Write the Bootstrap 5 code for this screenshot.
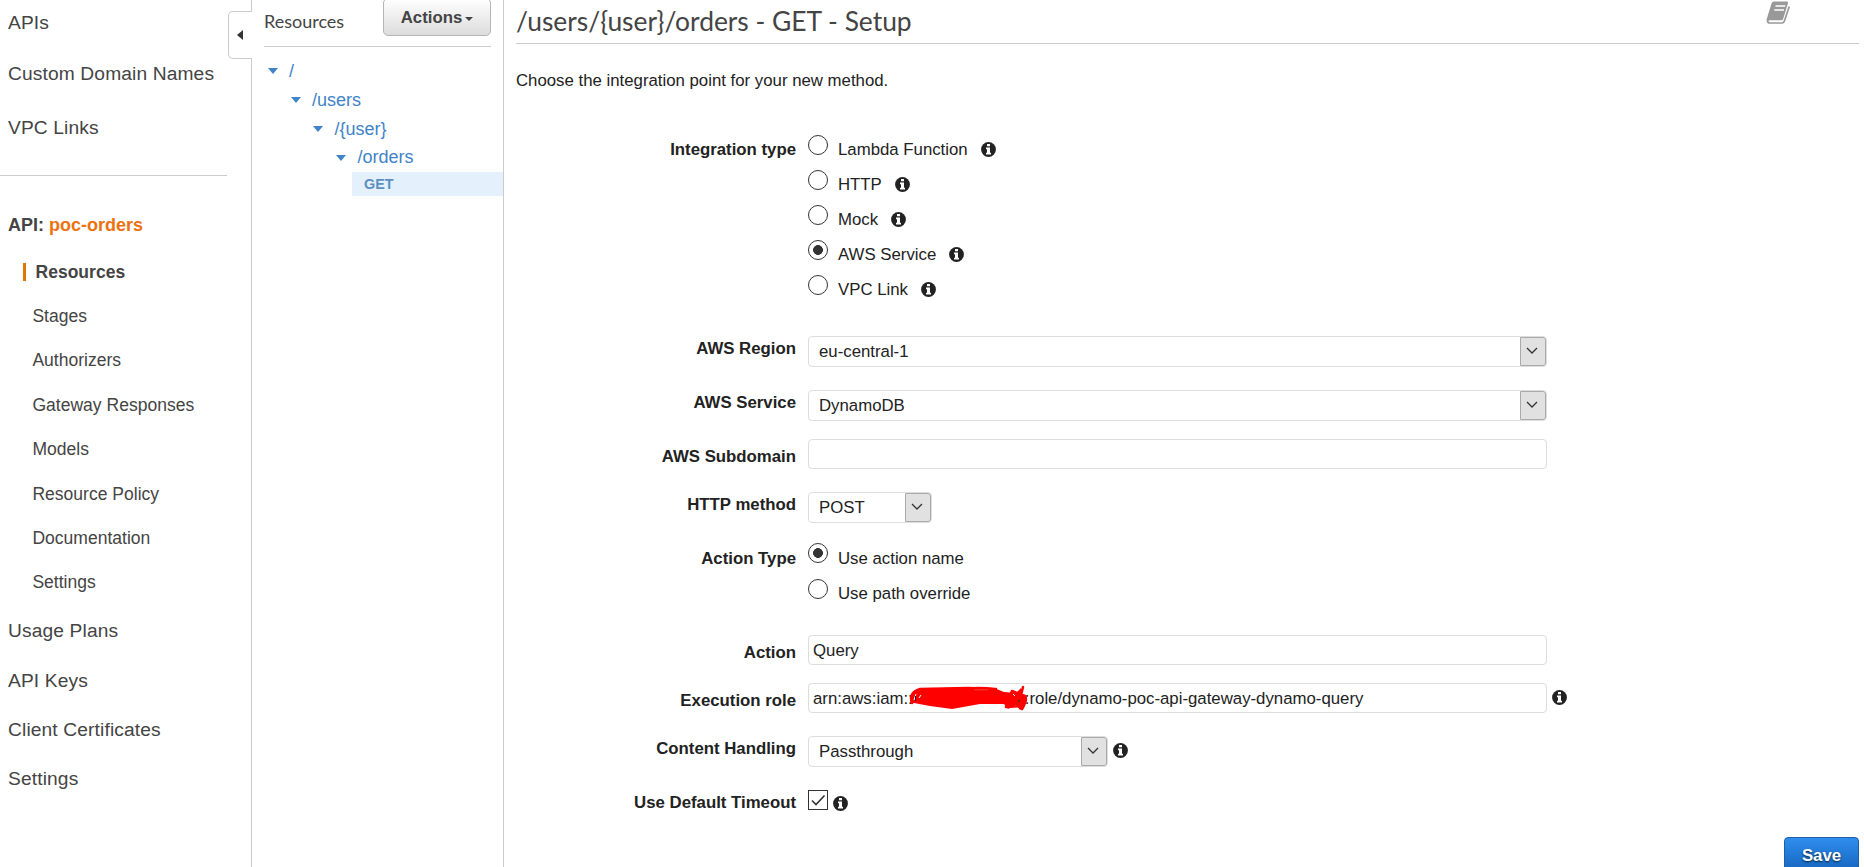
<!DOCTYPE html>
<html lang="en">
<head>
<meta charset="utf-8">
<meta name="viewport" content="width=device-width, initial-scale=1">
<title>API Gateway - Method Setup</title>
<link rel="stylesheet" href="https://cdn.jsdelivr.net/npm/bootstrap@5.3.0/dist/css/bootstrap.min.css">
<style>
  body { font-family: "Liberation Sans", Arial, sans-serif; font-size: 16.8px; line-height: 20px; color: #222; background: #fff; }
  .app { height: 867px; }
  /* left navigation */
  .side { width: 252px; border-right: 1px solid #ccc; color: #444; font-size: 19.2px; line-height: 24px; letter-spacing: .13px; padding-top: 11px; }
  .side a { display: block; color: inherit; text-decoration: none; padding-left: 8px; height: 24px; white-space: nowrap; }
  .side .rule { width: 227px; height: 1px; background: #ccc; margin: 35px 0 37px; }
  .side .api { font-size: 18px; letter-spacing: 0; font-weight: bold; }
  .side .api span { color: #ec7211; }
  .sub { font-size: 17.5px; letter-spacing: .02px; padding-top: 22.6px; gap: 20.4px; }
  .sub a { padding-left: 32.4px; }
  .sub a.current { font-weight: bold; padding-left: 23px; display: flex; align-items: center; }
  .sub a.current::before { content: ""; width: 3px; height: 18px; background: #e07700; margin-right: 9.5px; }
  .lower { padding-top: 25px; gap: 25.2px; }
  .collapser { left: 228px; top: 11px; width: 24px; height: 48px; border: 1px solid #ccc; border-right: 0; border-radius: 5px 0 0 5px; background: #fff; }
  /* resource tree */
  .tree { width: 252px; border-right: 1px solid #ccc; }
  .tree-head { height: 47px; margin: 0 12px; border-bottom: 1px solid #ccc; color: #444; }
  .tree-head .ttl { font: 18px/22px Lato, sans-serif; padding-top: 10px; }
  .btn-actions { width: 108px; height: 38px; margin-top: -2px; border: 1px solid #b5b5b5; border-radius: 5px; background: linear-gradient(#fff, #dcdcdc); color: #444; font-size: 16.8px; font-weight: bold; line-height: 20px; padding: 1px 0 0; }
  .btn-actions i { display: inline-block; border: 4px solid transparent; border-top-color: #444; border-bottom: 0; margin-left: 3px; vertical-align: 2px; }
  .node { height: 28.8px; line-height: 28.8px; font-size: 18px; color: #3f83c8; }
  .node::before { content: ""; border: 5.5px solid transparent; border-top: 6px solid #3f83c8; border-bottom: 0; margin-right: 11.5px; }
  .method { height: 24px; margin-left: 100px; padding-left: 12px; background: #e4f1fd; color: #5c8fc0; font-size: 14.4px; font-weight: bold; line-height: 24px; }
  /* main pane */
  .main { padding-left: 12px; padding-right: 5px; }
  .main-head { height: 44px; border-bottom: 1px solid #ccc; }
  .main-head h1 { font: 26.4px/32px Lato, sans-serif; letter-spacing: -.01px; color: #444; margin: 5px 0 0; }
  .main-head svg { margin: 1px 68px 0 0; }
  .intro { margin-top: 27px; height: 64px; }
  .f-row { display: flex; }
  .f-label { width: 280px; margin: 1px 12px 0 0; text-align: right; font-weight: bold; flex: none; }
  .opt { height: 35px; }
  .opt .txt { padding: 5px 13px 0 10px; }
  .opt .info { margin-top: 6.5px; }
  .dot { width: 20px; height: 20px; border: 1px solid #333; border-radius: 50%; flex: none; }
  .dot.on { background: radial-gradient(circle, #333 4.6px, #fff 5.2px); }
  .box { width: 739px; height: 30px; border: 1px solid #ddd; border-radius: 4px; line-height: 28px; padding: 1px 0 0 4px; white-space: nowrap; }
  .pick { height: 31px; line-height: 29px; padding: 0 0 0 10px; display: flex; justify-content: space-between; }
  .pick b { width: 26px; height: 29px; border: 1px solid #aaa; border-radius: 0 3px 3px 0; background: #e1e1e1; display: flex; align-items: center; justify-content: center; padding: 0 2px 2px 0; }
  .info { width: 15px; height: 15px; flex: none; display: block; }
  .redact { display: inline-block; position: relative; width: 112px; height: 10px; }
  .redact svg { position: absolute; left: -5px; top: -9px; }
  .check { width: 20px; height: 20px; border: 1px solid #333; }
  .btn-save { width: 75px; height: 36px; border: 1px solid #1a5fa8; border-radius: 4px; background: linear-gradient(#2f8ded, #1564bd); color: #fff; font-size: 16.8px; font-weight: bold; line-height: 20px; padding: 1px 0 0; text-shadow: 0 1px 2px #023; }
  .foot { margin-top: 24px; height: 33px; }
</style>
</head>
<body class="overflow-hidden">
<svg class="d-none">
  <symbol id="info" viewBox="0 0 15 15"><circle cx="7.5" cy="7.5" r="7.4" fill="#222"/><path d="M6 2h3v2.200H6zM5 5.500h4v5.300h1v1.800H5v-1.800h1V7.300H5z" fill="#fff"/></symbol>
  <symbol id="chev" viewBox="0 0 12 7"><path d="M1 1l5 5 5-5" fill="none" stroke="#333" stroke-width="1.300"/></symbol>
</svg>
<div class="app d-flex position-relative overflow-hidden">
  <nav class="side flex-shrink-0">
    <a href="#">APIs</a>
    <a href="#" style="margin-top:27px">Custom Domain Names</a>
    <a href="#" style="margin-top:30px">VPC Links</a>
    <div class="rule"></div>
    <a href="#" class="api">API: <span>poc-orders</span></a>
    <div class="sub d-flex flex-column">
      <a href="#" class="current">Resources</a>
      <a href="#">Stages</a>
      <a href="#">Authorizers</a>
      <a href="#">Gateway Responses</a>
      <a href="#">Models</a>
      <a href="#">Resource Policy</a>
      <a href="#">Documentation</a>
      <a href="#">Settings</a>
    </div>
    <div class="lower d-flex flex-column">
      <a href="#">Usage Plans</a>
      <a href="#">API Keys</a>
      <a href="#">Client Certificates</a>
      <a href="#">Settings</a>
    </div>
  </nav>
  <div class="collapser position-absolute d-flex align-items-center">
    <svg width="6" height="10" style="margin-left:8px"><path d="M6 0v10L0 5z" fill="#333"/></svg>
  </div>

  <section class="tree flex-shrink-0">
    <div class="tree-head d-flex justify-content-between align-items-start">
      <div class="ttl">Resources</div>
      <button class="btn btn-actions">Actions<i></i></button>
    </div>
    <div style="padding-top:10px">
      <div class="node d-flex align-items-center" style="padding-left:15.5px">/</div>
      <div class="node d-flex align-items-center" style="padding-left:38.5px">/users</div>
      <div class="node d-flex align-items-center" style="padding-left:61px">/{user}</div>
      <div class="node d-flex align-items-center" style="padding-left:84px">/orders</div>
      <div class="method">GET</div>
    </div>
  </section>

  <main class="main flex-grow-1">
    <div class="main-head d-flex justify-content-between align-items-start">
      <h1>/users/{user}/orders - GET - Setup</h1>
      <svg width="25" height="24" viewBox="0 0 25 24">
        <path d="M23.300 5.500L18.300 20.300Q17.800 22 16 22H3.800Q1.800 22 1.500 20" fill="none" stroke="#999" stroke-width="1.700"/>
        <path d="M8 .5h12.700q1.800 0 1.300 1.800L17.200 17.800q-.5 1.500-2 1.500H3.800q-1.300 0-1.600 1.200H.8Q.4 19 .9 17.500L5.500 2.400Q6.100.5 8 .5z" fill="#999"/>
        <path d="M9.500 5h9.800M8.300 9h9.700" stroke="#fff" stroke-width="1.600"/>
      </svg>
    </div>
    <div class="intro">Choose the integration point for your new method.</div>

    <form>
      <div class="f-row">
        <div class="f-label" style="padding-top:4px">Integration type</div>
        <div>
          <div class="opt d-flex"><span class="dot"></span><span class="txt">Lambda Function</span><svg class="info"><use href="#info"/></svg></div>
          <div class="opt d-flex"><span class="dot"></span><span class="txt">HTTP</span><svg class="info"><use href="#info"/></svg></div>
          <div class="opt d-flex"><span class="dot"></span><span class="txt">Mock</span><svg class="info"><use href="#info"/></svg></div>
          <div class="opt d-flex"><span class="dot on"></span><span class="txt">AWS Service</span><svg class="info"><use href="#info"/></svg></div>
          <div class="opt d-flex"><span class="dot"></span><span class="txt">VPC Link</span><svg class="info"><use href="#info"/></svg></div>
        </div>
      </div>
      <div class="f-row" style="margin-top:26px">
        <div class="f-label" style="padding-top:2px">AWS Region</div>
        <div class="box pick">eu-central-1<b><svg width="12" height="7"><use href="#chev"/></svg></b></div>
      </div>
      <div class="f-row" style="margin-top:23px">
        <div class="f-label" style="padding-top:2px">AWS Service</div>
        <div class="box pick">DynamoDB<b><svg width="12" height="7"><use href="#chev"/></svg></b></div>
      </div>
      <div class="f-row" style="margin-top:18px">
        <div class="f-label" style="padding-top:7px">AWS Subdomain</div>
        <div class="box"></div>
      </div>
      <div class="f-row" style="margin-top:23px">
        <div class="f-label" style="padding-top:2px">HTTP method</div>
        <div class="box pick" style="width:124px">POST<b><svg width="12" height="7"><use href="#chev"/></svg></b></div>
      </div>
      <div class="f-row" style="margin-top:20px">
        <div class="f-label" style="padding-top:5px">Action Type</div>
        <div>
          <div class="opt d-flex" style="height:36px"><span class="dot on"></span><span class="txt" style="padding-top:6px">Use action name</span></div>
          <div class="opt d-flex"><span class="dot"></span><span class="txt">Use path override</span></div>
        </div>
      </div>
      <div class="f-row" style="margin-top:21px">
        <div class="f-label" style="padding-top:7px">Action</div>
        <div class="box">Query</div>
      </div>
      <div class="f-row" style="margin-top:18px">
        <div class="f-label" style="padding-top:7px">Execution role</div>
        <div class="box">arn:aws:iam::<span class="redact"><svg width="122" height="27" viewBox="0 0 122 27">
          <path d="M4 8Q9 2 20 4L50 4Q68 0 86 3L96 7 108 8 113 3 114 9 118 13 116 23 112 25 108 20 100 24 96 19 72 19 44 24 22 21 6 18Q1 14 4 8z" fill="#f00"/>
          <path d="M4 18Q0 8 12 4L60 3 88 4M5 17Q10 6 18 7M98 22Q116 4 115 2Q111 16 114 24Q120 14 117 11L104 6 98 22 112 21" fill="none" stroke="#f00" stroke-width="2.500" stroke-linecap="round" stroke-linejoin="round"/>
          <path d="M6 15L8 9M11 13l2-3M105 9l2 2" stroke="#fff" stroke-width="1" fill="none"/>
          <path d="M7.500 16v-5M110 17l2-2" stroke="#222" stroke-width="1" fill="none"/>
          <path d="M66 4.800h14" stroke="#f66" stroke-width=".6"/>
        </svg></span>:role/dynamo-poc-api-gateway-dynamo-query</div>
        <svg class="info" style="margin:7px 0 0 5px"><use href="#info"/></svg>
      </div>
      <div class="f-row" style="margin-top:23px">
        <div class="f-label" style="padding-top:2px">Content Handling</div>
        <div class="box pick" style="width:300px">Passthrough<b><svg width="12" height="7"><use href="#chev"/></svg></b></div>
        <svg class="info" style="margin:7px 0 0 5px"><use href="#info"/></svg>
      </div>
      <div class="f-row" style="margin-top:23px">
        <div class="f-label" style="padding-top:2px">Use Default Timeout</div>
        <div class="check"><svg class="d-block" width="18" height="18"><path d="M3 9.500l4 4 8.500-9" fill="none" stroke="#333" stroke-width="1.600"/></svg></div>
        <svg class="info" style="margin:6px 0 0 5px"><use href="#info"/></svg>
      </div>
      <div class="foot d-flex justify-content-end"><button type="button" class="btn btn-save">Save</button></div>
    </form>
  </main>
</div>
<script src="https://cdn.jsdelivr.net/npm/bootstrap@5.3.0/dist/js/bootstrap.bundle.min.js"></script>
</body>
</html>
